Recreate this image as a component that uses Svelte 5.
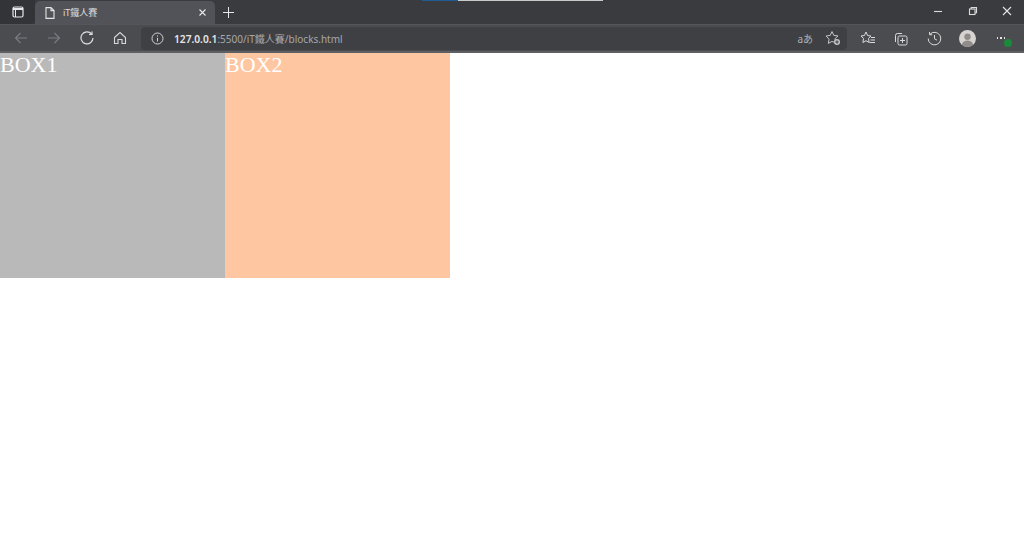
<script>
	const boxes = [
		{ label: 'BOX1', tone: 'grey' },
		{ label: 'BOX2', tone: 'peach' }
	];
</script>

<div class="browser">
	<div class="titlebar">
		<button class="tabs-btn" aria-label="Tab actions">
			<svg width="12" height="12" viewBox="0 0 12 12" fill="none" stroke="#e8e8e8" stroke-width="1.2">
				<rect x="1" y="1" width="10" height="10" rx="1.500" />
				<path d="M1 3h10" stroke-width="2" />
				<path d="M3.500 3v8" stroke-width="1" />
			</svg>
		</button>
		<div class="tab">
			<svg class="doc" width="10" height="12" viewBox="0 0 10 12" fill="none" stroke="#e4e4e4" stroke-width="1.1">
				<path d="M1 .6h5L9 3.600v7.800H1z M6 .6v3h3" />
			</svg>
			<span class="tab-title">iT鐵人賽</span>
			<svg class="tab-close" width="7" height="7" viewBox="0 0 7 7" stroke="#e8e8e8" stroke-width="1.1">
				<path d="M.5 .5l6 6M6.500 .5l-6 6" />
			</svg>
		</div>
		<svg class="new-tab" width="11" height="11" viewBox="0 0 11 11" stroke="#e8e8e8" stroke-width="1">
			<path d="M5.500 0v11M0 5.500h11" />
		</svg>
		<div class="drag">
			<div class="strip"><span class="blue"></span><span class="light"></span></div>
		</div>
		<div class="window-btns">
			<svg width="10" height="10" viewBox="0 0 10 10" stroke="#dcdcdc" stroke-width="1.1"><path d="M1 5.500h8" /></svg>
			<svg width="10" height="10" viewBox="0 0 10 10" fill="none" stroke="#dcdcdc" stroke-width="1.1">
				<rect x="1.500" y="3" width="5.500" height="5.500" /><path d="M3.200 3V1.500h5.300v5.300H7" />
			</svg>
			<svg width="10" height="10" viewBox="0 0 10 10" stroke="#e4e4e4" stroke-width="1.1"><path d="M1 1l8 8M9 1l-8 8" /></svg>
		</div>
	</div>

	<div class="toolbar">
		<div class="nav">
			<svg width="14" height="12" viewBox="0 0 14 12" fill="none" stroke="#7a7c82" stroke-width="1.1">
				<path d="M13 6H1.500M6.500 1L1.500 6l5 5" />
			</svg>
			<svg width="14" height="12" viewBox="0 0 14 12" fill="none" stroke="#7a7c82" stroke-width="1.1">
				<path d="M1 6h11.500M7.500 1l5 5-5 5" />
			</svg>
			<svg width="14" height="14" viewBox="0 0 14 14" fill="none" stroke="#e0e0e0" stroke-width="1.2">
				<path d="M11.600 3A6 6 0 1 0 13 7" /><path d="M12 .5V3.500H9" />
			</svg>
			<svg width="14" height="14" viewBox="0 0 14 14" fill="none" stroke="#d8d8d8" stroke-width="1.1">
				<path d="M1.500 6.500L7 1.500l5.500 5V12.500H9V8.500H5v4H1.500z" />
			</svg>
		</div>

		<div class="address">
			<svg class="info" width="13" height="13" viewBox="0 0 13 13" fill="none" stroke="#d4d4d4" stroke-width="1">
				<circle cx="6.500" cy="6.500" r="5.500" /><path d="M6.500 5.800v3.700M6.500 3.400v1.100" />
			</svg>
			<span class="url"><b>127.0.0.1</b>:5500/iT鐵人賽/blocks.html</span>
			<span class="translate">aあ</span>
			<svg class="fav" width="16" height="16" viewBox="0 0 16 16" fill="none" stroke="#c4c4c4" stroke-width="1">
				<path d="M7 1.500l1.800 3.900 4.200.5-3.100 2.900.6 2.700-.2 1.200-3.300-1.300-3.700 2 .8-4.200L1 6l4.200-.6z" />
				<circle cx="12" cy="12" r="3" fill="#c4c4c4" stroke="none" />
				<path d="M12 10.300v3.400M10.300 12h3.400" stroke="#3c3d41" />
			</svg>
		</div>

		<div class="tools">
			<svg width="16" height="14" viewBox="0 0 16 14" fill="none" stroke="#dadada" stroke-width="1">
				<path d="M6 1l1.600 3.500 3.400.5-2.500 2.500.6 4L6 9.700 2.900 11.500l.6-4L1 5l3.400-.5z" />
				<path d="M11 6.500h4M10.500 9h4.500M9.500 11.500h5.500" />
			</svg>
			<svg width="15" height="15" viewBox="0 0 15 15" fill="none" stroke="#dadada" stroke-width="1">
				<path d="M2.500 11V4.500a2 2 0 0 1 2-2H9" />
				<rect x="5" y="5" width="9" height="9" rx="1.500" />
				<path d="M9.500 7v5M7 9.500h5" />
			</svg>
			<svg width="15" height="15" viewBox="0 0 15 15" fill="none" stroke="#dadada" stroke-width="1">
				<path d="M2.800 3.400A6.300 6.300 0 1 1 1.200 7.500" /><path d="M2.500 1v2.700h2.700M7.500 4v3.800l2.500 1.400" />
			</svg>
			<svg class="avatar" width="17" height="17" viewBox="0 0 17 17">
				<circle cx="8.500" cy="8.500" r="8.500" fill="#d6d3d0" />
				<circle cx="8.500" cy="6.700" r="3.200" fill="#8f8c89" />
				<path d="M2.800 14.800c.8-3 3-4.300 5.700-4.300s4.900 1.300 5.700 4.300a8.500 8.500 0 0 1-11.400 0z" fill="#8f8c89" />
			</svg>
			<div class="more">
				<span class="dots"><i></i><i></i><i></i></span>
				<span class="badge"></span>
			</div>
		</div>
	</div>

	<div class="page">
		{#each boxes as box}
			<div class="box {box.tone}">{box.label}</div>
		{/each}
	</div>
</div>

<style>
	:global(body) {
		margin: 0;
		background: #fff;
	}

	.browser {
		width: 1024px;
		height: 544px;
		overflow: hidden;
		display: flex;
		flex-direction: column;
		font-family: "Noto Sans", "Noto Sans CJK TC", sans-serif;
	}

	.titlebar {
		height: 24px;
		background: #3a3b3f;
		display: flex;
		align-items: stretch;
		flex-shrink: 0;
	}

	.tabs-btn {
		width: 35px;
		padding: 0;
		border: 0;
		background: #333438;
		border-bottom-right-radius: 4px;
		display: flex;
		align-items: center;
		justify-content: center;
	}

	.tab {
		width: 180px;
		margin-top: 1px;
		background: #525358;
		border-radius: 5px 5px 0 0;
		display: flex;
		align-items: center;
	}

	.doc {
		margin-left: 10px;
	}

	.tab-title {
		margin-left: 8px;
		flex: 1;
		color: #dedede;
		font-size: 9px;
	}

	.tab-close {
		margin-right: 9px;
	}

	.new-tab {
		align-self: center;
		margin-left: 8px;
	}

	.drag {
		flex: 1;
		position: relative;
	}

	.strip {
		position: absolute;
		left: 188px;
		top: 0;
		display: flex;
		height: 1px;
	}

	.blue {
		width: 36px;
		background: #1f5c94;
	}

	.light {
		width: 145px;
		background: #c9c9c9;
	}

	.window-btns {
		width: 103px;
		padding: 0 12px 2px;
		box-sizing: border-box;
		display: flex;
		align-items: center;
		justify-content: space-between;
	}

	.toolbar {
		height: 29px;
		box-sizing: border-box;
		background: #4b4c50;
		border-top: 1px solid #55565a;
		border-bottom: 2px solid #5f6064;
		display: flex;
		align-items: center;
		flex-shrink: 0;
	}

	.nav {
		width: 141px;
		box-sizing: border-box;
		padding: 0 14px;
		display: flex;
		align-items: center;
		justify-content: space-between;
	}

	.address {
		width: 706px;
		height: 23px;
		box-sizing: border-box;
		background: #3f4044;
		border-radius: 4px;
		padding: 0 6px 0 10px;
		display: flex;
		align-items: center;
		color: #a6a7aa;
		font-size: 10px;
	}

	.url {
		margin-left: 10px;
		flex: 1;
		white-space: nowrap;
	}

	.url b {
		color: #e6e6e6;
		font-weight: 600;
		font-size: 10.200px;
	}

	.translate {
		color: #b0b0b0;
		font-size: 10px;
		margin-right: 12px;
	}

	.tools {
		flex: 1;
		padding-left: 4px;
		display: grid;
		grid-template-columns: repeat(5, 33.300px);
		align-items: center;
		justify-items: center;
	}

	.more {
		position: relative;
		width: 14px;
		height: 14px;
	}

	.dots {
		position: absolute;
		left: 3px;
		top: 6px;
		display: flex;
		gap: 2px;
	}

	.dots i {
		width: 1.500px;
		height: 1.500px;
		background: #e4e4e4;
	}

	.badge {
		position: absolute;
		right: -4px;
		bottom: -2px;
		width: 8px;
		height: 8px;
		border-radius: 50%;
		background: #1a8a3a;
	}

	.page {
		flex: 1;
		background: #fff;
		display: flex;
		align-items: flex-start;
	}

	.box {
		width: 225px;
		height: 225px;
		color: #fff;
		font-family: "Liberation Serif", serif;
		font-size: 22px;
		line-height: 23px;
	}

	.grey {
		background: #b9b9b9;
	}

	.peach {
		background: #ffc7a1;
	}
</style>
